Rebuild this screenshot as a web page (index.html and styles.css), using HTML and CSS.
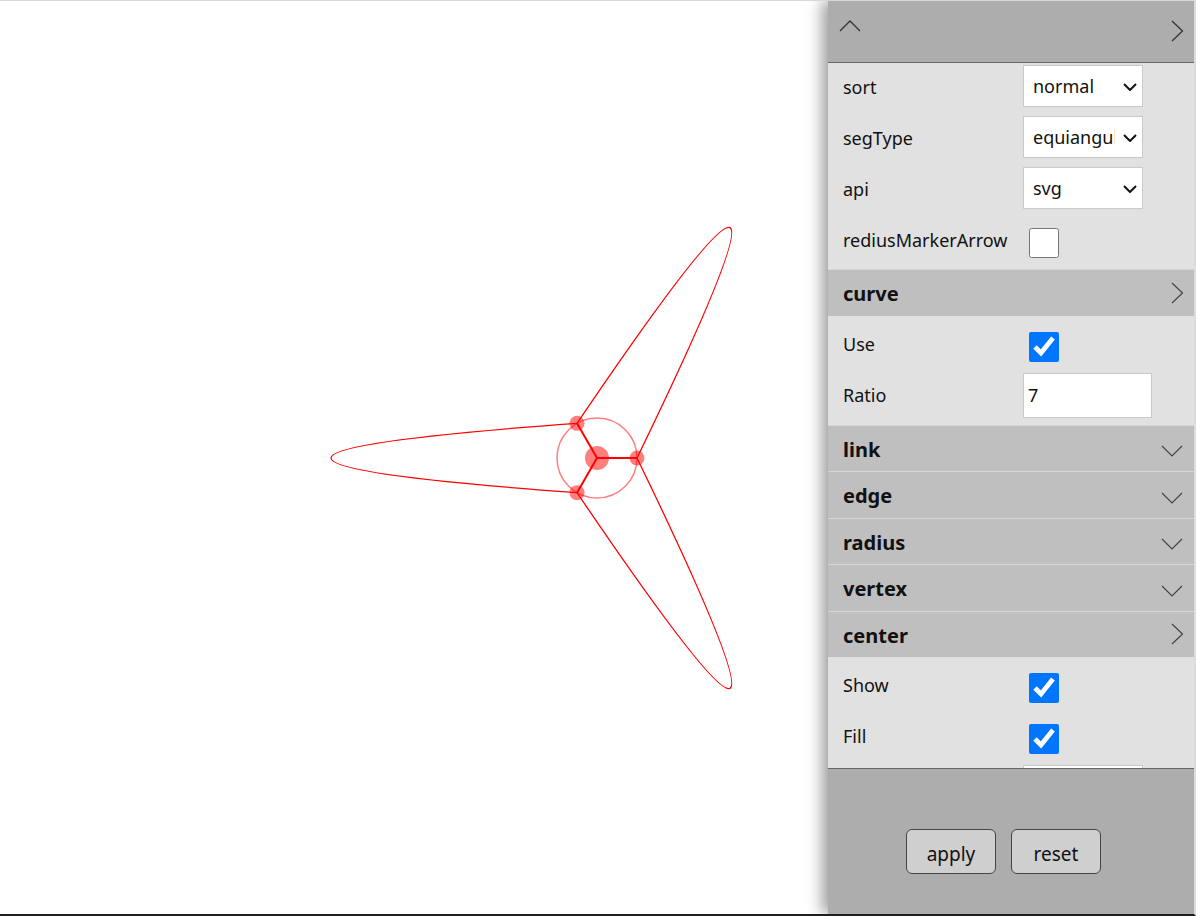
FILE: index.html
```html
<!DOCTYPE html>
<html lang="en">
<head>
<meta charset="utf-8">
<title>Shape editor</title>
<link rel="stylesheet" href="styles.css">
</head>
<body>
<div class="page">
  <main class="stage">
    <svg class="canvas" width="828" height="913" viewBox="0 0 828 913">
      <g transform="translate(597 457)">
        <g fill="none" stroke="#ff0000" stroke-width="1.3">
          <path d="M-20 -34.64 C-348 -11 -348 11 -20 34.64"/>
          <path d="M-20 -34.64 C-348 -11 -348 11 -20 34.64" transform="rotate(120)"/>
          <path d="M-20 -34.64 C-348 -11 -348 11 -20 34.64" transform="rotate(240)"/>
        </g>
        <circle r="40" fill="none" stroke="rgba(255,0,0,0.5)" stroke-width="1.5"/>
        <g stroke="#ff0000" stroke-width="2">
          <line x1="0" y1="0" x2="40" y2="0"/>
          <line x1="0" y1="0" x2="-20" y2="-34.64"/>
          <line x1="0" y1="0" x2="-20" y2="34.64"/>
        </g>
        <g fill="rgba(255,0,0,0.5)">
          <circle r="12"/>
          <circle cx="40" cy="0" r="7.5"/>
          <circle cx="-20" cy="-34.64" r="7.5"/>
          <circle cx="-20" cy="34.64" r="7.5"/>
        </g>
      </g>
    </svg>
  </main>

  <aside class="panel">
    <div class="panel-head">
      <svg class="icon-up" width="22" height="13" viewBox="0 0 22 13"><path d="M1 12 L11 2 L21 12" fill="none" stroke="#333" stroke-width="1.3"/></svg>
      <svg class="icon-right" width="13" height="22" viewBox="0 0 13 22"><path d="M1 1 L11.5 11 L1 21" fill="none" stroke="#333" stroke-width="1.3"/></svg>
    </div>

    <div class="panel-body">
      <div class="group group-top">
        <div class="row">
          <span class="label">sort</span>
          <div class="select-wrap">
            <select class="select"><option>normal</option></select>
            <svg class="select-arrow" width="14" height="8" viewBox="0 0 14 8"><path d="M1 1 L7 7 L13 1" fill="none" stroke="#111" stroke-width="2"/></svg>
          </div>
        </div>
        <div class="row">
          <span class="label">segType</span>
          <div class="select-wrap">
            <select class="select"><option>equiangular</option></select>
            <svg class="select-arrow" width="14" height="8" viewBox="0 0 14 8"><path d="M1 1 L7 7 L13 1" fill="none" stroke="#111" stroke-width="2"/></svg>
          </div>
        </div>
        <div class="row">
          <span class="label">api</span>
          <div class="select-wrap">
            <select class="select"><option>svg</option></select>
            <svg class="select-arrow" width="14" height="8" viewBox="0 0 14 8"><path d="M1 1 L7 7 L13 1" fill="none" stroke="#111" stroke-width="2"/></svg>
          </div>
        </div>
        <div class="row">
          <span class="label">rediusMarkerArrow</span>
          <input class="check" type="checkbox">
        </div>
      </div>

      <div class="sec-head">
        <span>curve</span>
        <svg class="icon-right" width="13" height="22" viewBox="0 0 13 22"><path d="M1 1 L11.5 11 L1 21" fill="none" stroke="#444" stroke-width="1.2"/></svg>
      </div>
      <div class="group">
        <div class="row">
          <span class="label">Use</span>
          <input class="check" type="checkbox" checked>
        </div>
        <div class="row">
          <span class="label">Ratio</span>
          <input class="text-input" type="text" value="7">
        </div>
      </div>

      <div class="sec-head">
        <span>link</span>
        <svg class="icon-down" width="22" height="13" viewBox="0 0 22 13"><path d="M1 1 L11 11 L21 1" fill="none" stroke="#444" stroke-width="1.2"/></svg>
      </div>
      <div class="sec-head">
        <span>edge</span>
        <svg class="icon-down" width="22" height="13" viewBox="0 0 22 13"><path d="M1 1 L11 11 L21 1" fill="none" stroke="#444" stroke-width="1.2"/></svg>
      </div>
      <div class="sec-head">
        <span>radius</span>
        <svg class="icon-down" width="22" height="13" viewBox="0 0 22 13"><path d="M1 1 L11 11 L21 1" fill="none" stroke="#444" stroke-width="1.2"/></svg>
      </div>
      <div class="sec-head">
        <span>vertex</span>
        <svg class="icon-down" width="22" height="13" viewBox="0 0 22 13"><path d="M1 1 L11 11 L21 1" fill="none" stroke="#444" stroke-width="1.2"/></svg>
      </div>
      <div class="sec-head">
        <span>center</span>
        <svg class="icon-right" width="13" height="22" viewBox="0 0 13 22"><path d="M1 1 L11.5 11 L1 21" fill="none" stroke="#444" stroke-width="1.2"/></svg>
      </div>
      <div class="group">
        <div class="row">
          <span class="label">Show</span>
          <input class="check" type="checkbox" checked>
        </div>
        <div class="row">
          <span class="label">Fill</span>
          <input class="check" type="checkbox" checked>
        </div>
        <div class="row">
          <span class="label"></span>
          <div class="select-box"></div>
        </div>
      </div>
    </div>

    <div class="panel-foot">
      <button class="btn" type="button">apply</button>
      <button class="btn" type="button">reset</button>
    </div>
  </aside>
</div>
</body>
</html>
```

FILE: styles.css
```css
html, body {
  margin: 0;
  padding: 0;
  background: #ffffff;
}

body {
  font-family: "Noto Sans", "Open Sans", sans-serif;
  color: #111;
}

.page {
  width: 1196px;
  height: 916px;
  box-sizing: border-box;
  border-top: 1px solid #d9d9dd;
  border-bottom: 2px solid #1e1e26;
  border-right: 2px solid #dcdcdc;
  display: flex;
  overflow: hidden;
  background: #ffffff;
}

.stage {
  flex: 1;
  min-width: 0;
  position: relative;
}

.canvas {
  display: block;
}

.panel {
  width: 366px;
  flex-shrink: 0;
  display: flex;
  flex-direction: column;
  position: relative;
  z-index: 1;
  background: #adadad;
  box-shadow: -6px 0 14px rgba(0, 0, 0, 0.38);
}

.panel-head {
  height: 61px;
  flex-shrink: 0;
  border-bottom: 1px solid #666;
  background: #adadad;
  display: flex;
  justify-content: space-between;
  align-items: flex-start;
}

.panel-head .icon-up {
  margin: 18px 0 0 11px;
}

.panel-head .icon-right {
  margin: 19px 10px 0 0;
}

.panel-body {
  flex: 1;
  min-height: 0;
  overflow: hidden;
  background: #e1e1e1;
  border-bottom: 1px solid #666;
}

.group {
  padding: 4px 0 3px;
  background: #e1e1e1;
}

.group-top {
  padding: 0 0 2px;
}

.row {
  height: 51px;
  box-sizing: border-box;
  padding: 2px 0 0 15px;
  display: flex;
  align-items: flex-start;
}

.label {
  width: 180px;
  flex-shrink: 0;
  font-size: 18px;
  line-height: 44px;
  color: #111;
  white-space: nowrap;
}

.select-wrap {
  position: relative;
  width: 120px;
  height: 42px;
}

.select {
  -webkit-appearance: none;
  appearance: none;
  width: 120px;
  height: 42px;
  box-sizing: border-box;
  border: 1px solid #c9c9c9;
  border-radius: 0;
  background: #ffffff;
  font-family: "Noto Sans", "Open Sans", sans-serif;
  font-size: 18px;
  color: #111;
  padding: 0 27px 0 9px;
  margin: 0;
  outline: none;
}

.select-box {
  width: 120px;
  height: 42px;
  box-sizing: border-box;
  border: 1px solid #c9c9c9;
  background: #ffffff;
}

.select-arrow {
  position: absolute;
  right: 6px;
  top: 18px;
  pointer-events: none;
}

.check {
  width: 30px;
  height: 30px;
  margin: 10px 0 0 6px;
  accent-color: #0075ff;
}

.text-input {
  width: 129px;
  height: 45px;
  box-sizing: border-box;
  border: 1px solid #c9c9c9;
  background: #ffffff;
  font-family: "Noto Sans", "Open Sans", sans-serif;
  font-size: 18px;
  color: #111;
  padding: 0 4px;
  margin: 0;
  outline: none;
}

.sec-head {
  height: 46.5px;
  box-sizing: border-box;
  border-top: 1px solid #d6d6d6;
  background: #bfbfbf;
  padding: 0 11px 0 15px;
  display: flex;
  align-items: center;
  justify-content: space-between;
  font-size: 20px;
  font-weight: 700;
  color: #111;
}

.sec-head span {
  padding-top: 2px;
}

.sec-head .icon-down {
  margin: 7px 0 0 0;
}

.sec-head .icon-right {
  margin: 0 -1px 0 0;
}

.panel-foot {
  height: 145px;
  flex-shrink: 0;
  box-sizing: border-box;
  padding: 60px 0 0 78px;
  display: flex;
  align-items: flex-start;
  gap: 15px;
  background: #adadad;
}

.btn {
  width: 90px;
  height: 45px;
  box-sizing: border-box;
  border: 1px solid #454545;
  border-radius: 6px;
  background: #cfcfcf;
  font-family: "Noto Sans", "Open Sans", sans-serif;
  font-size: 19px;
  color: #111;
  padding: 5px 0 0;
  margin: 0;
}
```
